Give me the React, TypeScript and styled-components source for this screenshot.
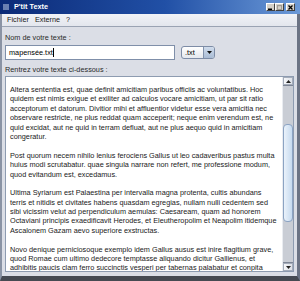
import React from "react";
import styled, { createGlobalStyle } from "styled-components";

const GlobalStyle = createGlobalStyle`
  html, body { margin: 0; padding: 0; background: #dbdee6; }
  body { font-family: "Liberation Sans", Arial, sans-serif; }
  #root { width: 300px; height: 281px; }
`;

const Window = styled.div`
  width: 300px;
  height: 281px;
  display: flex;
  flex-direction: column;
  overflow: hidden;
  font-family: "Liberation Sans", Arial, sans-serif;
  background: #dbdee6;
`;

const TitleBar = styled.div`
  height: 14px;
  flex: none;
  display: flex;
  align-items: center;
  padding: 0 5px 0 3px;
  background: linear-gradient(to right, #0b2a77 0%, #2150a6 55%, #6c9ad8 100%);
  color: #fff;
`;

const AppIcon = styled.svg`
  width: 6px;
  height: 6px;
  margin-right: 5px;
  flex: none;
`;

const Title = styled.span`
  flex: 1;
  font-weight: bold;
  font-size: 7.3px;
  line-height: 14px;
  white-space: nowrap;
`;

const CaptionButton = styled.div<{ $gap?: number; $disabled?: boolean }>`
  width: 9px;
  height: 8px;
  box-sizing: border-box;
  margin-left: ${(p) => p.$gap ?? 0}px;
  background: #d4d0c8;
  border: 1px solid;
  border-color: #ffffff #404040 #404040 #ffffff;
  display: flex;
  align-items: center;
  justify-content: center;
  color: ${(p) => (p.$disabled ? "#a09c94" : "#000")};
`;

const Frame = styled.div`
  flex: 1;
  display: flex;
  flex-direction: column;
  min-height: 0;
  border-left: 2px solid #8a93a4;
  border-right: 3px solid #6b7384;
  border-bottom: 5px solid #464a52;
`;

const MenuBar = styled.div`
  height: 12px;
  flex: none;
  display: flex;
  align-items: center;
  padding-left: 2px;
  background: linear-gradient(#f1f3f7, #e3e6ed);
  border-bottom: 1px solid #9aa3b3;
`;

const MenuItem = styled.span`
  font-size: 7.3px;
  line-height: 12px;
  padding: 0 3px;
  color: #202020;
  white-space: nowrap;
`;

const Content = styled.div`
  flex: 1;
  min-height: 0;
  display: flex;
  flex-direction: column;
  padding: 6px 3px 4px 3px;
`;

const FieldLabel = styled.div<{ $top?: number; $bottom?: number }>`
  font-size: 7.3px;
  line-height: 10px;
  color: #2a2a2a;
  margin-top: ${(p) => p.$top ?? 0}px;
  margin-bottom: ${(p) => p.$bottom ?? 0}px;
  white-space: nowrap;
`;

const FieldRow = styled.div`
  display: flex;
  align-items: center;
`;

const TextField = styled.div`
  width: 170px;
  height: 15px;
  box-sizing: border-box;
  border: 1px solid #7f8fa9;
  background: #fff;
  display: flex;
  align-items: center;
  padding-left: 3px;
  font-size: 7.3px;
  color: #000;
`;

const Caret = styled.span`
  width: 1px;
  height: 9px;
  background: #000;
`;

const Combo = styled.div`
  width: 34px;
  height: 13px;
  box-sizing: border-box;
  margin-left: 6px;
  border: 1px solid #7d8ca6;
  border-radius: 3px;
  background: linear-gradient(#ffffff, #e4e8ee);
  display: flex;
  overflow: hidden;
`;

const ComboText = styled.span`
  flex: 1;
  font-size: 7.3px;
  line-height: 11px;
  padding-left: 3px;
  color: #000;
`;

const ComboArrow = styled.div`
  width: 10px;
  background: linear-gradient(#d0dcec, #a9bcd5);
  border-left: 1px solid #8292ac;
  display: flex;
  align-items: center;
  justify-content: center;
`;

const TextArea = styled.div`
  flex: 1;
  min-height: 0;
  display: flex;
  border: 1px solid #8d9bb0;
  background: #fff;
`;

const TextBody = styled.div`
  flex: 1;
  min-width: 0;
  overflow: hidden;
  padding: 8px 0 0 4px;
  font-size: 7.3px;
  line-height: 9.4px;
  color: #1a1a1a;
`;

const Line = styled.div`
  white-space: pre;
  height: 9.4px;
`;

const ScrollBar = styled.div`
  width: 10px;
  flex: none;
  display: flex;
  flex-direction: column;
  background: #c9cdd5;
  border-left: 1px solid #e9ecf1;
`;

const ScrollArrow = styled.div`
  height: 8px;
  flex: none;
  box-sizing: border-box;
  border: 1px solid #a4acba;
  background: linear-gradient(to right, #f6f7fa, #dde1e8);
  display: flex;
  align-items: center;
  justify-content: center;
`;

const ScrollTrack = styled.div<{ $offset: number }>`
  flex: 1;
  display: flex;
  flex-direction: column;
  padding-top: ${(p) => p.$offset}px;
  border-top: 1px solid #7e8696;
  border-bottom: 1px solid #7e8696;
`;

const Thumb = styled.div<{ $size: number }>`
  height: ${(p) => p.$size}px;
  box-sizing: border-box;
  border: 1px solid #8ba3c3;
  border-radius: 4px;
  background: linear-gradient(to right, #eaf2fb, #c6daef);
`;

const paragraphs: string[][] = [
  [
    "Altera sententia est, quae definit amicitiam paribus officiis ac voluntatibus. Hoc",
    "quidem est nimis exigue et exiliter ad calculos vocare amicitiam, ut par sit ratio",
    "acceptorum et datorum. Divitior mihi et affluentior videtur esse vera amicitia nec",
    "observare restricte, ne plus reddat quam acceperit; neque enim verendum est, ne",
    "quid excidat, aut ne quid in terram defluat, aut ne plus aequo quid in amicitiam",
    "congeratur.",
  ],
  [
    "Post quorum necem nihilo lenius ferociens Gallus ut leo cadaveribus pastus multa",
    "huius modi scrutabatur. quae singula narrare non refert, me professione modum,",
    "quod evitandum est, excedamus.",
  ],
  [
    "Ultima Syriarum est Palaestina per intervalla magna protenta, cultis abundans",
    "terris et nitidis et civitates habens quasdam egregias, nullam nulli cedentem sed",
    "sibi vicissim velut ad perpendiculum aemulas: Caesaream, quam ad honorem",
    "Octaviani principis exaedificavit Herodes, et Eleutheropolim et Neapolim itidemque",
    "Ascalonem Gazam aevo superiore exstructas.",
  ],
  [
    "Novo denique perniciosoque exemplo idem Gallus ausus est inire flagitium grave,",
    "quod Romae cum ultimo dedecore temptasse aliquando dicitur Gallienus, et",
    "adhibitis paucis clam ferro succinctis vesperi per tabernas palabatur et conpita",
  ],
];

export default function App() {
  const lines: string[] = [];
  paragraphs.forEach((p, i) => {
    if (i > 0) lines.push(" ");
    lines.push(...p);
  });

  return (
    <>
      <GlobalStyle />
      <Window>
        <TitleBar>
          <AppIcon viewBox="0 0 6 6">
            <rect x="0" y="0.5" width="6" height="1" fill="#c8d4ea" />
            <rect x="0" y="2.5" width="6" height="1" fill="#c8d4ea" />
            <rect x="0" y="4.5" width="6" height="1" fill="#c8d4ea" />
          </AppIcon>
          <Title>P'tit Texte</Title>
          <CaptionButton>
            <svg width="5" height="5" viewBox="0 0 5 5">
              <rect x="0" y="3.5" width="4" height="1.5" fill="currentColor" />
            </svg>
          </CaptionButton>
          <CaptionButton $disabled>
            <svg width="5" height="5" viewBox="0 0 5 5">
              <rect x="0.5" y="0.5" width="4" height="4" fill="none" stroke="currentColor" strokeWidth="1" />
              <rect x="0" y="0" width="5" height="1.2" fill="currentColor" />
            </svg>
          </CaptionButton>
          <CaptionButton $gap={2}>
            <svg width="5" height="5" viewBox="0 0 5 5">
              <path d="M0.5 0.5 L4.5 4.5 M4.5 0.5 L0.5 4.5" stroke="currentColor" strokeWidth="1.3" />
            </svg>
          </CaptionButton>
        </TitleBar>
        <Frame>
          <MenuBar>
            <MenuItem>Fichier</MenuItem>
            <MenuItem>Externe</MenuItem>
            <MenuItem>?</MenuItem>
          </MenuBar>
          <Content>
            <FieldLabel $bottom={2}>Nom de votre texte :</FieldLabel>
            <FieldRow>
              <TextField>
                mapensée.txt
                <Caret />
              </TextField>
              <Combo>
                <ComboText>.txt</ComboText>
                <ComboArrow>
                  <svg width="5" height="3" viewBox="0 0 5 3">
                    <path d="M0 0 L5 0 L2.5 3 Z" fill="#111" />
                  </svg>
                </ComboArrow>
              </Combo>
            </FieldRow>
            <FieldLabel $top={5} $bottom={1}>Rentrez votre texte ci-dessous :</FieldLabel>
            <TextArea>
              <TextBody>
                {lines.map((l, i) => (
                  <Line key={i}>{l}</Line>
                ))}
              </TextBody>
              <ScrollBar>
                <ScrollArrow>
                  <svg width="5" height="3" viewBox="0 0 5 3">
                    <path d="M0 3 L5 3 L2.5 0 Z" fill="#222" />
                  </svg>
                </ScrollArrow>
                <ScrollTrack $offset={38}>
                  <Thumb $size={98} />
                </ScrollTrack>
                <ScrollArrow>
                  <svg width="5" height="3" viewBox="0 0 5 3">
                    <path d="M0 0 L5 0 L2.5 3 Z" fill="#222" />
                  </svg>
                </ScrollArrow>
              </ScrollBar>
            </TextArea>
          </Content>
        </Frame>
      </Window>
    </>
  );
}
